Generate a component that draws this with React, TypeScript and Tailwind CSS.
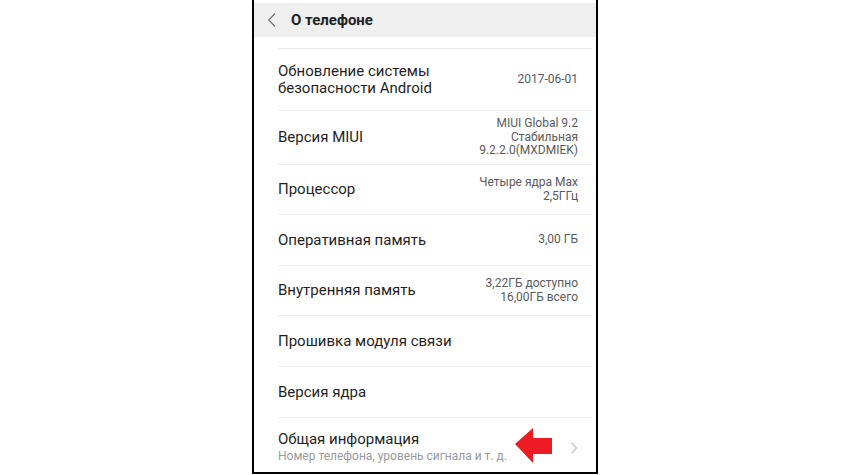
import React from "react";

const font = { fontFamily: "Roboto, 'Noto Sans', Arial, sans-serif" };

function Row({ h, label, value }: { h: string; label: React.ReactNode; value?: React.ReactNode }) {
  return (
    <div className={`flex items-center justify-between border-t border-[#ececec] pr-[14px] ${h}`}>
      <div className="text-[15px] leading-[17px] text-[#1f1f1f]">{label}</div>
      {value && <div className="text-right text-[12px] leading-[13.5px] text-[#5a5a5a]">{value}</div>}
    </div>
  );
}

export default function App() {
  return (
    <div className="flex h-[475px] w-[850px] justify-center bg-white" style={font}>
      <div className="flex h-[474px] w-[346px] flex-col border-x-2 border-b-2 border-black bg-white pt-[3px]">
        <div className="flex h-[34px] items-center bg-[#efefef]">
          <svg width="10" height="16" viewBox="0 0 10 16" className="ml-[13px]">
            <path d="M8 1.5 L1.8 8 L8 14.5" fill="none" stroke="#777" strokeWidth="1.3" />
          </svg>
          <span className="ml-[14px] text-[15px] font-bold text-[#222]">О телефоне</span>
        </div>
        <div className="h-[11px]" />
        <div className="ml-[24px] mr-[4px] flex flex-1 flex-col">
          <Row
            h="h-[62px]"
            label={<>Обновление системы<br />безопасности Android</>}
            value={<>2017-06-01</>}
          />
          <Row
            h="h-[54px]"
            label="Версия MIUI"
            value={<>MIUI Global 9.2<br />Стабильная<br />9.2.2.0(MXDMIEK)</>}
          />
          <Row h="h-[50px]" label="Процессор" value={<>Четыре ядра Max<br />2,5ГГц</>} />
          <Row h="h-[51px]" label="Оперативная память" value={<>3,00 ГБ</>} />
          <Row h="h-[50px]" label="Внутренняя память" value={<>3,22ГБ доступно<br />16,00ГБ всего</>} />
          <Row h="h-[51px]" label="Прошивка модуля связи" />
          <Row h="h-[51px]" label="Версия ядра" />
          <div className="relative flex flex-1 items-start justify-between border-t border-[#ececec] pr-[14px] pt-[13px]">
            <div>
              <div className="text-[15px] leading-[17px] text-[#1f1f1f]">Общая информация</div>
              <div className="mt-[1px] text-[12px] leading-[15px] text-[#9a9a9a]">Номер телефона, уровень сигнала и т. д.</div>
            </div>
            <svg width="8" height="14" viewBox="0 0 8 14" className="mt-[10px]">
              <path d="M1.5 1.5 L6.5 7 L1.5 12.5" fill="none" stroke="#c4c4c4" strokeWidth="1.2" />
            </svg>
            <svg width="38" height="37" viewBox="0 0 38 37" className="absolute left-[237px] top-[9px]">
              <polygon points="0,17 18,1 18,11 37,11 37,27 18,27 18,36" fill="#ee1b24" />
            </svg>
          </div>
        </div>
      </div>
    </div>
  );
}
